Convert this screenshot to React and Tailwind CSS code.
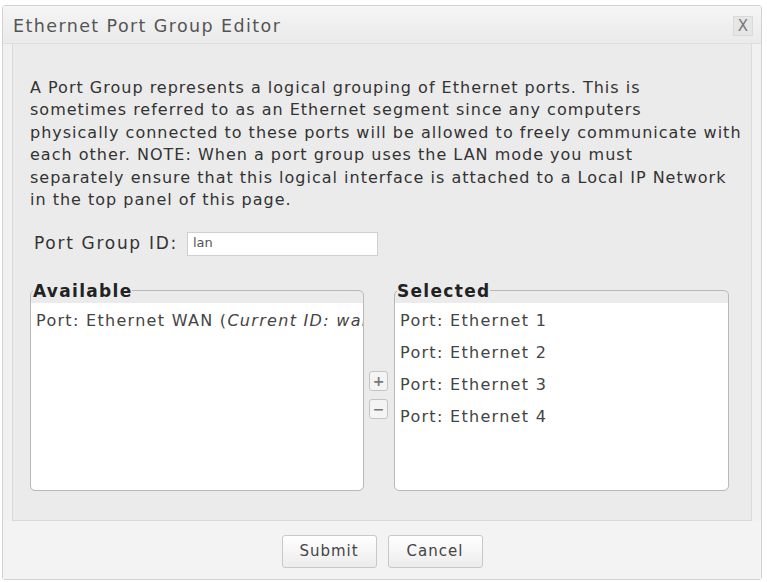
import React from "react";

const font = { fontFamily: '"DejaVu Sans", Verdana, sans-serif' };

function ListBox({ title, children }) {
  return (
    <fieldset className="m-0 min-w-0 p-0 border border-[#b9b9b9] rounded-[5px] bg-[#ebebeb] flex flex-col h-[210px] w-full">
      <legend className="ml-[2px] px-0 text-[17px] font-bold leading-[20px] tracking-[1.3px] text-[#222]">{title}</legend>
      <div className="mt-[2px] flex-1 bg-white rounded-b-[5px] overflow-hidden pl-[5px] pt-[2px]">
        {children}
      </div>
    </fieldset>
  );
}

function Item({ children }) {
  return (
    <div className="whitespace-nowrap text-[16px] leading-[32px] tracking-[1.3px] text-[#444]">{children}</div>
  );
}

const lines = [
  "A Port Group represents a logical grouping of Ethernet ports. This is",
  "sometimes referred to as an Ethernet segment since any computers",
  "physically connected to these ports will be allowed to freely communicate with",
  "each other. NOTE: When a port group uses the LAN mode you must",
  "separately ensure that this logical interface is attached to a Local IP Network",
  "in the top panel of this page.",
];

export default function App() {
  return (
    <div className="w-[767px] h-[582px] bg-white pt-[5px] pl-[2px] pr-[5px] pb-[2px]" style={font}>
      <div className="h-full flex flex-col border border-[#d2d2d2] rounded-[3px] bg-[#f1f1f1]">
        <div className="h-[38px] flex items-center justify-between pl-[10px] pr-[8px] pt-[3px] bg-gradient-to-b from-[#f5f5f5] to-[#eaeaea] border-b border-[#dedede]">
          <span className="text-[17.5px] tracking-[1.4px] text-[#555]">Ethernet Port Group Editor</span>
          <span className="w-[20px] h-[20px] flex items-center justify-center bg-[#e6e6e6] border border-[#dadada] text-[#777] text-[15px] leading-none">X</span>
        </div>
        <div className="flex-1 mx-[9px] border border-[#dadada] border-t-0 bg-[#ebebeb] pl-[17px] pr-[4px] pt-[33px]">
          <p className="text-[16px] leading-[22.4px] text-[#333] tracking-[1px]">
            {lines.map((l, i) => (
              <span key={i} className="block whitespace-nowrap">{l}</span>
            ))}
          </p>
          <div className="mt-[20px] ml-[4px] flex items-center gap-[9px]">
            <span className="text-[17px] tracking-[1.7px] text-[#333]">Port Group ID:</span>
            <div className="w-[191px] h-[24px] bg-white border border-[#cfcfcf] text-[13px] text-[#555] pl-[5px] leading-[20px]">lan</div>
          </div>
          <div className="mt-[24px] flex items-start gap-[5px]">
            <div className="w-[334px]">
              <ListBox title="Available">
                <Item>
                  Port: Ethernet WAN (<i>Current ID: wan</i>)
                </Item>
              </ListBox>
            </div>
            <div className="flex flex-col gap-[8px] w-[20px] mt-[90px]">
              <span className="w-[19px] h-[20px] flex items-center justify-center border border-[#c4c4c4] rounded-[3px] bg-[#f4f4f4] text-[#777] text-[14px] leading-none font-bold">+</span>
              <span className="w-[19px] h-[20px] flex items-center justify-center border border-[#c4c4c4] rounded-[3px] bg-[#f4f4f4] text-[#777] text-[14px] leading-none font-bold">−</span>
            </div>
            <div className="w-[335px]">
              <ListBox title="Selected">
                <Item>Port: Ethernet 1</Item>
                <Item>Port: Ethernet 2</Item>
                <Item>Port: Ethernet 3</Item>
                <Item>Port: Ethernet 4</Item>
              </ListBox>
            </div>
          </div>
        </div>
        <div className="h-[58px] flex items-center justify-center gap-[11px] bg-[#f3f3f3] pt-[2px]">
          <button className="w-[95px] h-[33px] border border-[#c8c8c8] rounded-[3px] bg-gradient-to-b from-white to-[#ececec] text-[15px] tracking-[1px] text-[#444]">Submit</button>
          <button className="w-[95px] h-[33px] border border-[#c8c8c8] rounded-[3px] bg-gradient-to-b from-white to-[#ececec] text-[15px] tracking-[1px] text-[#444]">Cancel</button>
        </div>
      </div>
    </div>
  );
}
